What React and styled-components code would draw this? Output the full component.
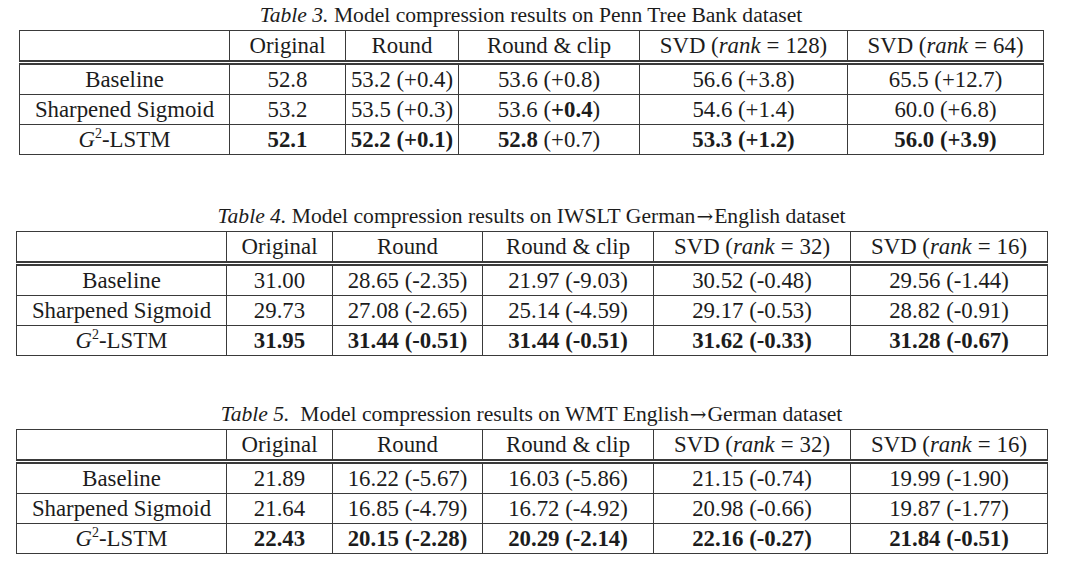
import React from "react";
import styled, { createGlobalStyle } from "styled-components";

const GlobalStyle = createGlobalStyle`
  html, body {
    margin: 0;
    padding: 0;
    background: #ffffff;
  }
  body {
    font-family: "Liberation Serif", "Times New Roman", serif;
    color: #1c1c1c;
  }
`;

const Page = styled.div`
  width: 1080px;
  height: 561px;
  overflow: hidden;
  display: flex;
  flex-direction: column;
  padding-top: 3px;
  box-sizing: border-box;
`;

const Figure = styled.div`
  display: flex;
  flex-direction: column;
  align-items: flex-start;
  margin-left: ${(p) => p.left}px;
  margin-bottom: ${(p) => p.gap}px;
`;

const Caption = styled.div`
  width: ${(p) => p.width}px;
  text-align: center;
  font-size: 21.6px;
  line-height: 25px;
  height: 25px;
  margin-bottom: 2px;
  white-space: pre;
`;

const Grid = styled.table`
  border-collapse: collapse;
  table-layout: fixed;
  font-size: 22.8px;
`;

const Cell = styled.td`
  border: 1.5px solid #3a3a3a;
  height: 29px;
  padding: 0;
  text-align: center;
  white-space: nowrap;
  line-height: 28px;
`;

const HeadCell = styled(Cell)`
  border-bottom: 5px double #3a3a3a;
`;

const Math = styled.i`
  font-style: italic;
`;

const Sup = styled.sup`
  font-size: 14px;
  vertical-align: 9px;
  line-height: 0;
`;

const Eq = styled.span`
  padding: 0 6px;
`;

const Arrow = styled.span`
  font-family: "DejaVu Serif", serif;
  font-size: 20px;
  padding: 0 1px;
`;

const G2 = () => (
  <>
    <Math>G</Math>
    <Sup>2</Sup>-LSTM
  </>
);

const Svd = ({ rank }) => (
  <>
    SVD (<Math>rank</Math>
    <Eq>=</Eq>
    {rank})
  </>
);

const tables = [
  {
    label: "Table 3.",
    title: " Model compression results on Penn Tree Bank dataset",
    cols: [210, 116, 113, 181, 208, 196],
    left: 19,
    gap: 49,
    ranks: [128, 64],
    rows: [
      ["Baseline", "52.8", "53.2 (+0.4)", "53.6 (+0.8)", "56.6 (+3.8)", "65.5 (+12.7)"],
      ["Sharpened Sigmoid", "53.2", "53.5 (+0.3)", <>53.6 (<b>+0.4</b>)</>, "54.6 (+1.4)", "60.0 (+6.8)"],
      [
        <G2 />,
        <b>52.1</b>,
        <b>52.2 (+0.1)</b>,
        <>
          <b>52.8</b> (+0.7)
        </>,
        <b>53.3 (+1.2)</b>,
        <b>56.0 (+3.9)</b>,
      ],
    ],
  },
  {
    label: "Table 4.",
    title: (
      <>
        {" "}Model compression results on IWSLT German<Arrow>→</Arrow>English dataset
      </>
    ),
    cols: [210, 106, 150, 171, 197, 197],
    left: 16,
    gap: 46,
    ranks: [32, 16],
    rows: [
      ["Baseline", "31.00", "28.65 (-2.35)", "21.97 (-9.03)", "30.52 (-0.48)", "29.56 (-1.44)"],
      ["Sharpened Sigmoid", "29.73", "27.08 (-2.65)", "25.14 (-4.59)", "29.17 (-0.53)", "28.82 (-0.91)"],
      [<G2 />, <b>31.95</b>, <b>31.44 (-0.51)</b>, <b>31.44 (-0.51)</b>, <b>31.62 (-0.33)</b>, <b>31.28 (-0.67)</b>],
    ],
  },
  {
    label: "Table 5.",
    title: (
      <>
        {"  "}Model compression results on WMT English<Arrow>→</Arrow>German dataset
      </>
    ),
    cols: [210, 106, 150, 171, 197, 197],
    left: 16,
    gap: 0,
    ranks: [32, 16],
    rows: [
      ["Baseline", "21.89", "16.22 (-5.67)", "16.03 (-5.86)", "21.15 (-0.74)", "19.99 (-1.90)"],
      ["Sharpened Sigmoid", "21.64", "16.85 (-4.79)", "16.72 (-4.92)", "20.98 (-0.66)", "19.87 (-1.77)"],
      [<G2 />, <b>22.43</b>, <b>20.15 (-2.28)</b>, <b>20.29 (-2.14)</b>, <b>22.16 (-0.27)</b>, <b>21.84 (-0.51)</b>],
    ],
  },
];

const ResultTable = ({ t }) => {
  const width = t.cols.reduce((a, b) => a + b, 0);
  return (
    <Figure left={t.left} gap={t.gap}>
      <Caption width={width}>
        <i>{t.label}</i>
        {t.title}
      </Caption>
      <Grid style={{ width }}>
        <colgroup>
          {t.cols.map((w, i) => (
            <col key={i} style={{ width: w }} />
          ))}
        </colgroup>
        <thead>
          <tr>
            <HeadCell />
            <HeadCell>Original</HeadCell>
            <HeadCell>Round</HeadCell>
            <HeadCell>Round &amp; clip</HeadCell>
            <HeadCell>
              <Svd rank={t.ranks[0]} />
            </HeadCell>
            <HeadCell>
              <Svd rank={t.ranks[1]} />
            </HeadCell>
          </tr>
        </thead>
        <tbody>
          {t.rows.map((row, r) => (
            <tr key={r}>
              {row.map((c, i) => (
                <Cell key={i}>{c}</Cell>
              ))}
            </tr>
          ))}
        </tbody>
      </Grid>
    </Figure>
  );
};

export default function App() {
  return (
    <Page>
      <GlobalStyle />
      {tables.map((t, i) => (
        <ResultTable key={i} t={t} />
      ))}
    </Page>
  );
}
